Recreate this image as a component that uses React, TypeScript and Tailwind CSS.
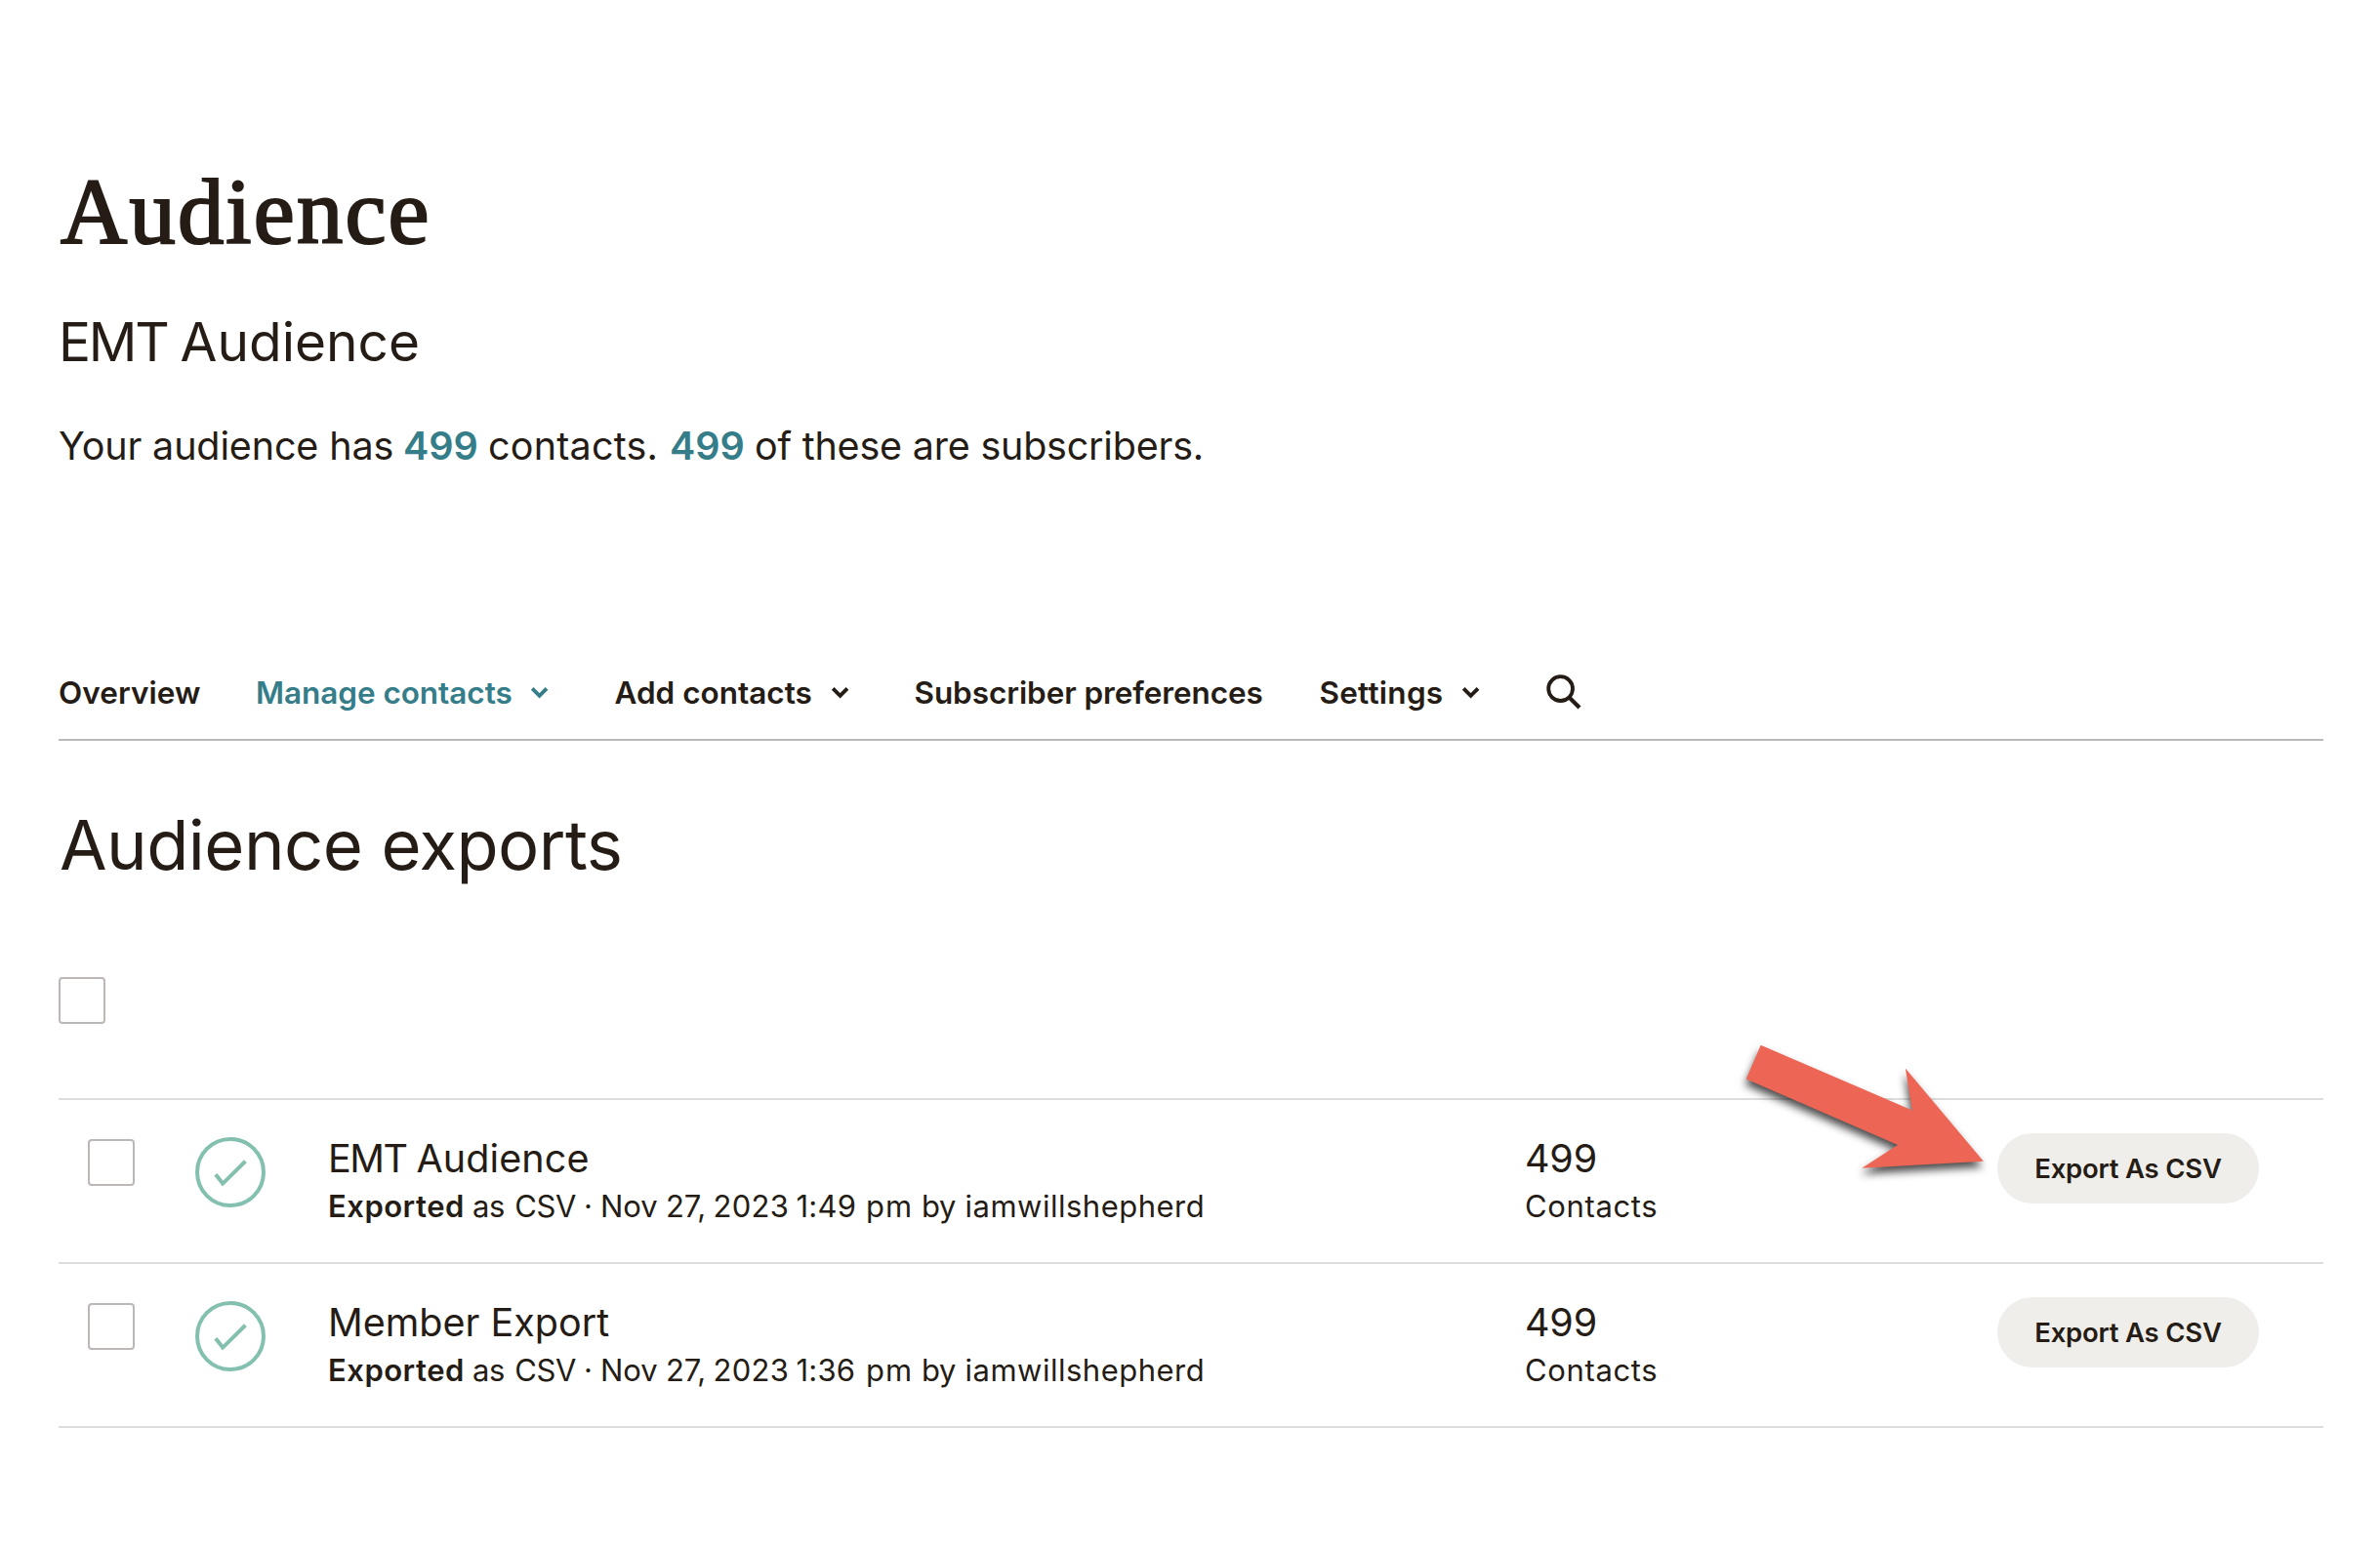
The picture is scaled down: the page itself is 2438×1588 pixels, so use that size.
import type { ReactNode } from "react";

function Chevron() {
  return (
    <svg className="h-[14px] w-[20px]" viewBox="0 0 20 14" fill="none" stroke="currentColor" strokeWidth="3.9">
      <path d="M2.2 2.4 9.6 9.8 17 2.4" />
    </svg>
  );
}

function Checkbox() {
  return <button aria-label="Select" className="size-12 shrink-0 rounded border-2 border-[#bdb8b5] bg-white" />;
}

function ExportedIcon() {
  return (
    <svg className="size-[72px]" viewBox="0 0 72 72" fill="none" stroke="#83c0b0" strokeWidth="4">
      <circle cx="36" cy="36" r="34" />
      <path d="M20.9 38.2 28.2 47.6 51.4 24.8" />
    </svg>
  );
}

function Row({ title, minute }: { title: ReactNode; minute: string }) {
  return (
    <div className="flex h-[168px] items-start border-t-2 border-[#dcdddc] pl-[30px]">
      <div className="w-[110px] shrink-0 pt-[40px]">
        <Checkbox />
      </div>
      <div className="w-[136px] shrink-0 pt-[38px]">
        <ExportedIcon />
      </div>
      <div className="w-[1226px] shrink-0 pt-[36px]">
        <div className="h-[49px] text-[39.5px] leading-[49px]">{title}</div>
        <div className="mt-[4px] flex h-[40px] text-[31px] leading-[40px] whitespace-pre">
          <strong className="w-[148px] font-semibold tracking-[0.5px]">Exported </strong>
          <span className="w-[114px] tracking-[-0.4px] [word-spacing:2px]">as CSV </span>
          <span className="w-[17px]">· </span>
          <span className="w-[67px] tracking-[-0.1px]">Nov </span>
          <span className="w-[48.5px] tracking-[-0.2px]">27, </span>
          <span className="w-[85px] tracking-[0.3px]">2023 </span>
          <span className="w-[71.5px] tracking-[0.2px]">{minute} </span>
          <span className="w-[57px] tracking-[1px]">pm </span>
          <span className="w-[44.5px] tracking-[-0.4px]">by </span>
          <span className="tracking-[0.5px]">iamwillshepherd</span>
        </div>
      </div>
      <div className="w-[484px] shrink-0 pt-[36px]">
        <div className="h-[49px] text-[39.5px] leading-[49px] tracking-[-0.16px]">499</div>
        <div className="mt-[4px] h-[40px] text-[31px] leading-[40px] tracking-[0.65px]">Contacts</div>
      </div>
      <div className="pt-[34px]">
        <button className="h-[72px] w-[268px] rounded-full bg-[#efeeea] pt-[2px] text-[27.5px] font-semibold tracking-[-0.21px]">
          Export As CSV
        </button>
      </div>
    </div>
  );
}

function Arrow() {
  return (
    <svg
      className="pointer-events-none absolute top-[1060px] left-[1770px] h-[160px] w-[280px] overflow-visible drop-shadow-[-1px_6px_4px_rgba(0,0,0,0.7)]"
      viewBox="1770 1060 280 160"
    >
      <path
        d="M1803.7 1070.7 1958.8 1137.5 1951.8 1094.5 2031.8 1189.7 1907.3 1196.7 1944 1173 1788.7 1105.5Z"
        fill="#ed6554"
      />
    </svg>
  );
}

export default function App() {
  return (
    <div className="relative h-[1588px] w-[2438px] overflow-hidden bg-white pt-[167px] pr-[58px] pl-[60px] font-['Inter',sans-serif] text-[#241c15]">
      <h1 className="h-[100px] pl-[2px] font-['Liberation_Serif',serif] text-[94.5px] leading-[100px] tracking-[2.2px] [-webkit-text-stroke:2.2px_#241c15]">
        Audience
      </h1>
      <div className="mt-[53px] h-[60px] text-[55px] leading-[60px]">
        <span className="tracking-[-2.3px]">EMT </span>Audience
      </div>
      <p className="mt-[53px] flex h-[48px] text-[39.5px] leading-[48px] whitespace-pre">
        <span className="w-[353px] tracking-[-0.14px]">Your audience has </span>
        <span className="w-[87px] font-semibold text-[#347d89]">499 </span>
        <span className="w-[186px] tracking-[0.2px]">contacts. </span>
        <span className="w-[87px] font-semibold text-[#347d89]">499 </span>
        <span className="tracking-[-0.22px]">of these are subscribers.</span>
      </p>
      <nav className="mt-[181px] flex h-[97px] items-center border-b-2 border-[#b9b9b9] text-[31.5px] font-semibold">
        <a className="w-[202px] tracking-[0.05px]">Overview</a>
        <a className="flex w-[367.5px] items-center text-[#347d89]">
          <span className="w-[281px] tracking-[-0.05px]">Manage contacts</span>
          <Chevron />
        </a>
        <a className="flex w-[307px] items-center">
          <span className="w-[221.5px]">Add contacts</span>
          <Chevron />
        </a>
        <a className="w-[415px] tracking-[-0.08px]">Subscriber preferences</a>
        <a className="flex w-[232.5px] items-center">
          <span className="w-[145px] tracking-[0.25px]">Settings</span>
          <Chevron />
        </a>
        <svg className="mt-[-2px] size-[36px]" viewBox="0 0 36 36" fill="none" stroke="currentColor" strokeWidth="3.8">
          <circle cx="14.6" cy="14.6" r="12.4" />
          <path d="M23.2 23.2 34 34" strokeWidth="4.2" />
        </svg>
      </nav>
      <h2 className="mt-[67px] h-[80px] pl-[1px] text-[70.5px] leading-[80px] tracking-[-0.55px]">Audience exports</h2>
      <div className="mt-[95px] flex h-[48px]">
        <Checkbox />
      </div>
      <div className="mt-[76px] border-b-2 border-[#dcdddc]">
        <Row
          title={
            <>
              <span className="tracking-[-1.4px]">EMT </span>
              <span className="tracking-[0.1px]">Audience</span>
            </>
          }
          minute="1:49"
        />
        <Row title="Member Export" minute="1:36" />
      </div>
      <Arrow />
    </div>
  );
}
